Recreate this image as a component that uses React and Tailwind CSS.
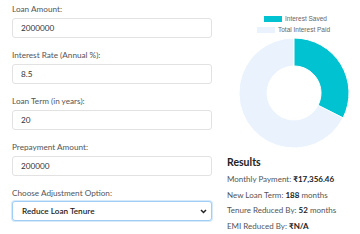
import React from "react";

const fields = [
  { label: "Loan Amount:", value: "2000000" },
  { label: "Interest Rate (Annual %):", value: "8.5" },
  { label: "Loan Term (in years):", value: "20" },
  { label: "Prepayment Amount:", value: "200000" },
];

function Field({ label, value }) {
  return (
    <div className="flex flex-col mb-[11px]">
      <div className="text-[8.2px] leading-[12px] text-[#555] h-[12px] mb-[3px]">{label}</div>
      <div className="h-[20px] border border-[#e2e2e2] rounded-[3px] bg-white flex items-center pl-[8px] text-[8.2px] text-[#333]">
        {value}
      </div>
    </div>
  );
}

export default function App() {
  return (
    <div
      className="w-[360px] h-[234px] bg-white flex pl-[12px] overflow-hidden"
      style={{ fontFamily: "Lato, 'Open Sans', sans-serif" }}
    >
      <div className="w-[200px] flex flex-col pt-[3px]">
        {fields.map((f) => (
          <Field key={f.label} {...f} />
        ))}
        <div className="flex flex-col">
          <div className="text-[8.2px] leading-[12px] text-[#555] h-[12px] mb-[2px]">Choose Adjustment Option:</div>
          <div className="h-[20px] border border-[#9fcdf3] rounded-[3px] bg-white flex items-center justify-between pl-[9px] pr-[4px] text-[8.2px] text-[#222] font-semibold shadow-[0_0_0_1px_#d6eafb]">
            <span>Reduce Loan Tenure</span>
            <svg width="7" height="5" viewBox="0 0 7 5">
              <path d="M1 1 L3.5 3.5 L6 1" stroke="#222" strokeWidth="1.5" fill="none" />
            </svg>
          </div>
        </div>
      </div>
      <div className="w-[133px] ml-[15px] flex flex-col">
        <div
          className="flex flex-col items-center pt-[13px] text-[6.5px] text-[#666]"
          style={{ fontFamily: "'Liberation Sans', Arial, sans-serif" }}
        >
          <div className="h-[11px] flex items-center gap-[3px] pl-[4px]">
            <span className="w-[18px] h-[6px] bg-[#00c2d1]" />
            <span>Interest Saved</span>
          </div>
          <div className="h-[11px] flex items-center gap-[3px]">
            <span className="w-[18px] h-[6px] bg-[#e9f2fd]" />
            <span>Total Interest Paid</span>
          </div>
        </div>
        <div className="flex justify-center mt-[3px]">
          <svg width="110" height="110" viewBox="0 0 110 110">
            <path
              d="M104.09 79.80 A55 55 0 1 1 55 0 L55 28 A27 27 0 1 0 79.10 67.17 Z"
              fill="#e9f2fd"
              stroke="#fff"
              strokeWidth="1"
            />
            <path
              d="M55 0 A55 55 0 0 1 104.09 79.80 L79.10 67.17 A27 27 0 0 0 55 28 Z"
              fill="#00c2d1"
              stroke="#fff"
              strokeWidth="1"
            />
          </svg>
        </div>
        <div className="mt-[8px] text-[10.5px] leading-[13px] font-bold text-[#222]">Results</div>
        <div className="mt-[3px] flex flex-col text-[8px] leading-[15.6px] text-[#555]">
          <div>
            Monthly Payment: <b className="text-[#222]">₹17,356.46</b>
          </div>
          <div>
            New Loan Term: <b className="text-[#222]">188</b> months
          </div>
          <div>
            Tenure Reduced By: <b className="text-[#222]">52</b> months
          </div>
          <div>
            EMI Reduced By: <b className="text-[#222]">₹N/A</b>
          </div>
        </div>
      </div>
    </div>
  );
}
